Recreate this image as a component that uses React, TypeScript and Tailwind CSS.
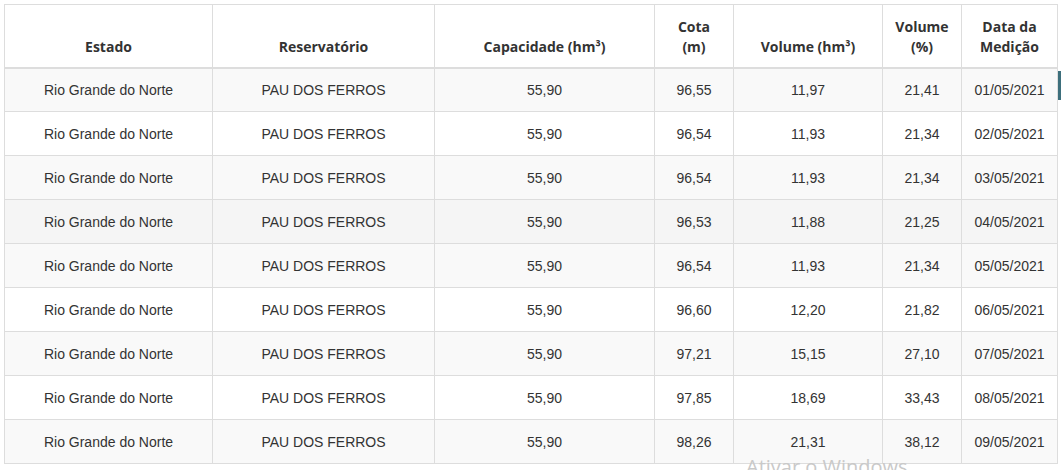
import React from "react";

const rows = [
  ["96,55", "11,97", "21,41", "01/05/2021"],
  ["96,54", "11,93", "21,34", "02/05/2021"],
  ["96,54", "11,93", "21,34", "03/05/2021"],
  ["96,53", "11,88", "21,25", "04/05/2021"],
  ["96,54", "11,93", "21,34", "05/05/2021"],
  ["96,60", "12,20", "21,82", "06/05/2021"],
  ["97,21", "15,15", "27,10", "07/05/2021"],
  ["97,85", "18,69", "33,43", "08/05/2021"],
  ["98,26", "21,31", "38,12", "09/05/2021"],
];

const th =
  "border border-[#dddddd] border-b-2 align-bottom text-center font-bold px-2 pb-[10px] leading-[20px]";
const td = "border border-[#dddddd] text-center align-middle px-2 leading-[20px]";

export default function App() {
  return (
    <div className="relative w-[1062px] h-[470px] overflow-hidden bg-white p-1 text-[#333333]">
      <table className="table-fixed w-[1053px] border-collapse text-[14px]">
        <colgroup>
          <col className="w-[208px]" />
          <col className="w-[222px]" />
          <col className="w-[220px]" />
          <col className="w-[79px]" />
          <col className="w-[149px]" />
          <col className="w-[79px]" />
          <col className="w-[96px]" />
        </colgroup>
        <thead className="font-['Open_Sans',sans-serif]">
          <tr className="h-[63px]">
            <th className={th}>Estado</th>
            <th className={th}>Reservatório</th>
            <th className={th}>Capacidade (hm³)</th>
            <th className={th}>
              Cota
              <br />
              (m)
            </th>
            <th className={th}>Volume (hm³)</th>
            <th className={th}>
              Volume
              <br />
              (%)
            </th>
            <th className={th}>
              Data da
              <br />
              Medição
            </th>
          </tr>
        </thead>
        <tbody className="font-['Liberation_Sans',Arial,sans-serif]">
          {rows.map((r, i) => (
            <tr
              key={i}
              className={
                i === 3
                  ? "h-[44px] bg-[#f5f5f5]"
                  : i % 2 === 0
                  ? "h-[44px] bg-[#f9f9f9]"
                  : "h-[44px] bg-white"
              }
            >
              <td className={td}>Rio Grande do Norte</td>
              <td className={td}>PAU DOS FERROS</td>
              <td className={td}>55,90</td>
              <td className={td}>{r[0]}</td>
              <td className={td}>{r[1]}</td>
              <td className={td}>{r[2]}</td>
              <td className={td}>{r[3]}</td>
            </tr>
          ))}
        </tbody>
      </table>
      <div className="absolute left-[1058px] top-[71px] w-[3px] h-[29px] bg-[#3d6f7c]" />
      <div className="absolute left-[746px] top-[457px] text-[20px] leading-none text-[#c9c9c9] font-['Open_Sans',sans-serif] whitespace-nowrap">
        Ativar o Windows
      </div>
    </div>
  );
}
